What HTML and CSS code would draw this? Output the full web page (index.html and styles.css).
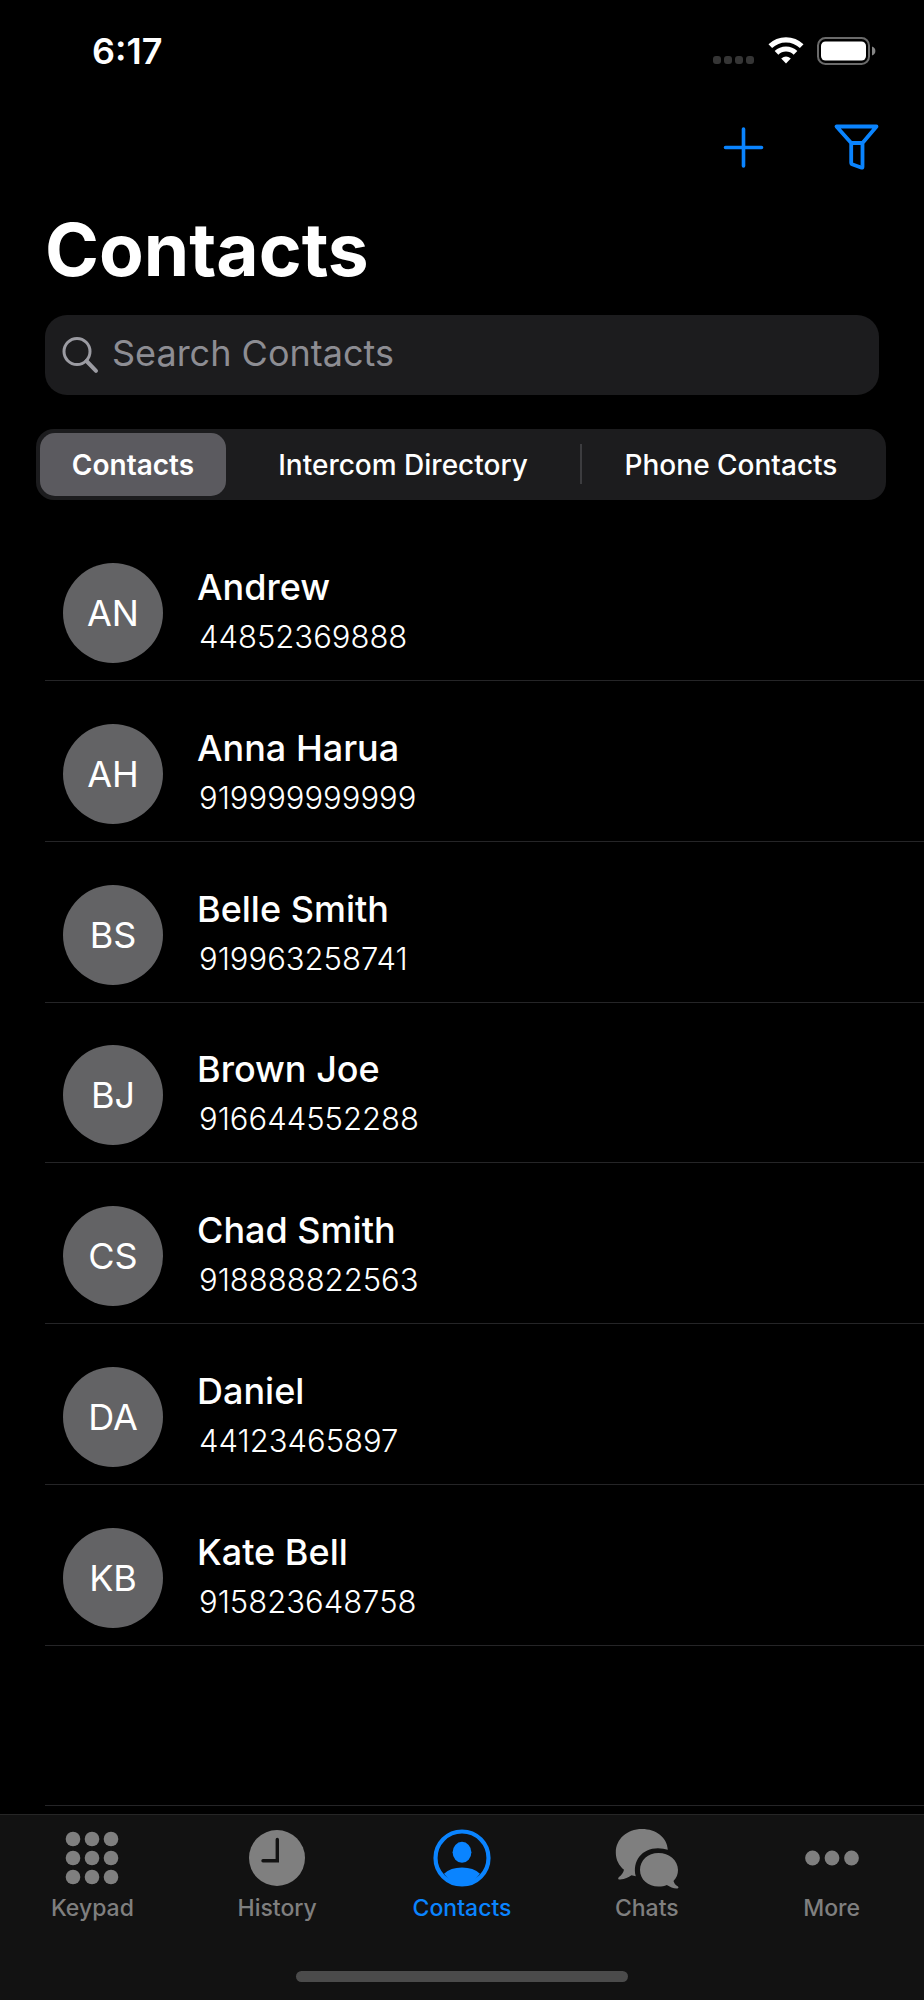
FILE: index.html
```html
<!DOCTYPE html>
<html lang="en">
<head>
    <meta charset="utf-8">
    <meta name="viewport" content="width=device-width, initial-scale=1">
    <title>Contacts</title>
    <link rel="stylesheet" href="styles.css">
</head>
<body>
    <div class="status">
        <span class="time">6:17</span>
        <div class="status-icons">
            <svg width="42" height="9" viewBox="0 0 42 9" fill="#353535">
                <rect x="0" y="0" width="8" height="8" rx="3" />
                <rect x="11" y="0" width="8" height="8" rx="3" />
                <rect x="22" y="0" width="8" height="8" rx="3" />
                <rect x="33" y="0" width="8" height="8" rx="3" />
            </svg>
            <svg width="36" height="28" viewBox="0 0 36 28" fill="none" stroke="#fff" stroke-width="5.2">
                <path d="M2.3 9.2a22.5 22.5 0 0 1 31.4 0" />
                <path d="M8.5 15.9a13.5 13.5 0 0 1 19 0" />
                <path d="M18 26.5l-4.8-5q4.8-3.8 9.6 0z" fill="#fff" stroke="none" />
            </svg>
            <svg width="59" height="28" viewBox="0 0 59 28">
                <rect x="1" y="1" width="51" height="26" rx="7.5" fill="none" stroke="#6a6a6a" stroke-width="2" />
                <rect x="4" y="4.5" width="45" height="19" rx="4.5" fill="#fff" />
                <path d="M55 9.5c4.5 1.500 4.5 7.5 0 9z" fill="#858585" />
            </svg>
        </div>
    </div>

    <div class="nav">
        <button type="button" aria-label="Add contact">
            <svg width="46" height="46" viewBox="0 0 46 46" stroke-width="3.6">
                <path d="M23.500 5v37M5.500 23.500h36" />
            </svg>
        </button>
        <button type="button" aria-label="Filter">
            <svg width="46" height="46" viewBox="0 0 46 46" stroke-width="3.8">
                <path d="M2.500 2.500h40L28.500 19H17.200zM17.200 19v19.500q0 1.500 1.500 2l9 3.200q.8 0 .8-1V19" />
            </svg>
        </button>
    </div>

    <h1>Contacts</h1>

    <label class="search">
        <svg width="36" height="37" viewBox="0 0 36 37" fill="none" stroke="#9b9ba2">
            <circle cx="15" cy="14.5" r="13" stroke-width="3" />
            <path d="M24.500 24l9.500 9.800" stroke-width="4" stroke-linecap="round" />
        </svg>
        <input type="search" placeholder="Search Contacts" aria-label="Search Contacts">
    </label>

    <div class="segment">
        <button type="button" class="on">Contacts</button>
        <button type="button">Intercom Directory</button>
        <button type="button">Phone Contacts</button>
    </div>

    <ul class="list">
        <li><span class="avatar">AN</span><div class="info"><h2>Andrew</h2><p>44852369888</p></div></li>
        <li><span class="avatar">AH</span><div class="info"><h2>Anna Harua</h2><p>919999999999</p></div></li>
        <li><span class="avatar">BS</span><div class="info"><h2>Belle Smith</h2><p>919963258741</p></div></li>
        <li><span class="avatar">BJ</span><div class="info"><h2>Brown Joe</h2><p>916644552288</p></div></li>
        <li><span class="avatar">CS</span><div class="info"><h2>Chad Smith</h2><p>918888822563</p></div></li>
        <li><span class="avatar">DA</span><div class="info"><h2>Daniel</h2><p>44123465897</p></div></li>
        <li><span class="avatar">KB</span><div class="info"><h2>Kate Bell</h2><p>915823648758</p></div></li>
        <li></li>
    </ul>

    <div class="foot">
        <nav class="tabs">
            <a href="#keypad">
                <svg width="64" height="60" viewBox="0 0 64 60" fill="currentColor">
                    <circle cx="13" cy="11" r="7.3" /><circle cx="32" cy="11" r="7.3" /><circle cx="51" cy="11" r="7.3" />
                    <circle cx="13" cy="30" r="7.3" /><circle cx="32" cy="30" r="7.3" /><circle cx="51" cy="30" r="7.3" />
                    <circle cx="13" cy="49" r="7.3" /><circle cx="32" cy="49" r="7.3" /><circle cx="51" cy="49" r="7.3" />
                </svg>
                Keypad
            </a>
            <a href="#history">
                <svg width="64" height="60" viewBox="0 0 64 60">
                    <circle cx="32" cy="30" r="28" fill="currentColor" />
                    <path d="M32.300 11.500V32.700H18" fill="none" stroke="#121212" stroke-width="3.4" stroke-linecap="round" />
                </svg>
                History
            </a>
            <a href="#contacts" class="on">
                <svg width="64" height="60" viewBox="0 0 64 60" fill="currentColor">
                    <circle cx="32" cy="30" r="26.5" fill="none" stroke="currentColor" stroke-width="4.2" />
                    <ellipse cx="32" cy="24.3" rx="9.4" ry="10.5" />
                    <path d="M14 45.800Q20.500 39.500 32 39.500T50 45.800Q42 57 32 57T14 45.800z" />
                </svg>
                Contacts
            </a>
            <a href="#chats">
                <svg width="64" height="60" viewBox="0 0 64 60" fill="currentColor">
                    <path d="M27 1C12 1 .8 11 .8 24.500c0 7.500 3.200 13 8.200 17.300-.8 3.200-2.300 5.200-5 7.200-1.600 1.300-.8 2.800 1.200 2.600 4.800-.5 8.300-2.300 11.300-4.300l4.300 1C17 33 27 20.300 43 20.300q5.500 0 9.800 1.500C52.200 9.500 41 1 27 1z" />
                    <path d="M43.500 25C33 25 25 32.300 25 42c0 9.500 8 16.600 18.500 16.600 3.200 0 6-.5 8.300-1.500 3.200 2 6.500 3.600 10.300 3.500 1.600-.1 1.800-1.600.6-2.400-2.400-1.500-3.600-3.100-4.200-5.300 3-3 4.500-6.600 4.500-10.900C63 32.300 54 25 43.500 25z" />
                </svg>
                Chats
            </a>
            <a href="#more">
                <svg width="64" height="60" viewBox="0 0 64 60" fill="currentColor">
                    <circle cx="12.5" cy="30" r="7.4" /><circle cx="32" cy="30" r="7.4" /><circle cx="51.5" cy="30" r="7.4" />
                </svg>
                More
            </a>
        </nav>
        <div class="home-bar"></div>
    </div>
</body>
</html>
```
FILE: styles.css
```css
* { box-sizing: border-box; margin: 0; padding: 0; }
body { display: flex; flex-direction: column; min-height: 100vh; background: #000; color: #fff; font-family: Inter, "Liberation Sans", sans-serif; }
button { border: 0; background: none; color: inherit; font: inherit; cursor: pointer; }
svg { display: block; flex: none; overflow: visible; }
a { color: inherit; text-decoration: none; }

/* status bar */
.status { display: flex; justify-content: space-between; align-items: center; height: 101px; padding: 0 48px 0 92px; }
.time { font-size: 36px; font-weight: 600; }
.status-icons { display: flex; align-items: flex-end; gap: 13px; }

/* top actions */
.nav { display: flex; justify-content: flex-end; align-items: center; gap: 68px; height: 92px; padding-right: 44px; }
.nav svg { fill: none; stroke: #0a84ff; stroke-linecap: round; stroke-linejoin: round; }

h1 { padding: 0 45px; font-size: 73px; line-height: 114px; font-weight: 700; }

.search { display: flex; align-items: center; gap: 14px; height: 80px; margin: 8px 45px 34px; padding: 0 17px; border-radius: 22px; background: #1c1c1e; }
.search input { flex: 1; min-width: 0; padding-bottom: 4px; border: 0; outline: 0; background: none; color: #fff; font: 400 36px Inter, "Liberation Sans", sans-serif; }
.search input::placeholder { color: #8d8d93; opacity: 1; }

/* segmented control */
.segment { display: flex; height: 71px; margin: 0 38px 20px 36px; padding: 4px; border-radius: 18px; background: #1c1c1e; font-size: 28px; font-weight: 500; }
.segment button { position: relative; flex: 354 1 0; white-space: nowrap; }
.segment button:first-child { flex-grow: 186; }
.segment button:last-child { flex-grow: 302; }
.segment .on { border-radius: 15px; background: #5b5a5f; font-weight: 600; }
.segment button:last-child::before { content: ""; position: absolute; left: 0; top: 11px; bottom: 12px; width: 2px; background: #3c3c3f; }

/* contacts */
.list { display: flex; flex: 1; flex-direction: column; margin-left: 45px; list-style: none; }
.list li { display: flex; flex: 1 0 auto; align-items: flex-end; gap: 34px; min-height: 160px; padding: 0 18px 17px; border-bottom: 1px solid #252527; }
.avatar { display: flex; justify-content: center; align-items: center; width: 100px; height: 100px; border-radius: 50%; background: #636365; font-size: 36px; }
.info { height: 100px; }
.info h2 { font-size: 36px; line-height: 48px; font-weight: 500; }
.info p { padding-left: 2px; font-size: 31px; line-height: 52px; font-weight: 300; }

/* bottom tabs */
.foot { margin-top: 8px; padding-bottom: 18px; border-top: 1px solid #262626; background: #121212; }
.tabs { display: flex; padding: 13px 0 43px; color: #7f7f7f; font-size: 23px; line-height: 40px; font-weight: 500; }
.tabs a { display: flex; flex: 1; flex-direction: column; align-items: center; }
.tabs .on { color: #0a84ff; }
.home-bar { width: 36%; height: 11px; margin: 0 auto; border-radius: 6px; background: #4b4b4b; }
```
